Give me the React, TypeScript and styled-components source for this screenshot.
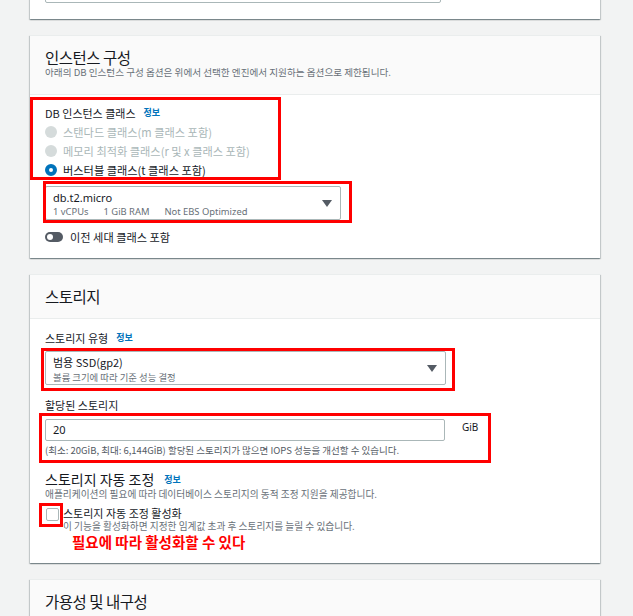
import React from 'react';
import styled, { createGlobalStyle } from 'styled-components';

const GlobalStyle = createGlobalStyle`
  html, body {
    margin: 0;
    padding: 0;
    background: #f2f3f3;
  }
  body {
    font-family: "Noto Sans CJK KR", "Noto Sans", sans-serif;
    color: #16191f;
    overflow: hidden;
  }
`;

// page + cards

const Page = styled.div`
  display: flex;
  flex-direction: column;
  gap: 16px;
  width: 570px;
  margin-top: -28px;
  padding-left: 30px;
`;

const Card = styled.section`
  background: #ffffff;
  border-top: 1px solid #eaeded;
  box-shadow: 0 1px 1px 0 rgba(0, 28, 36, 0.3), 1px 1px 1px 0 rgba(0, 28, 36, 0.15),
    -1px 1px 1px 0 rgba(0, 28, 36, 0.15);
`;

const CardHeader = styled.header<{ $sub?: boolean }>`
  background: #fafafa;
  padding: 12px 15px ${p => (p.$sub ? '15px' : '13px')};
  border-bottom: 1px solid #eaeded;
`;

const CardTitle = styled.h2`
  margin: 0;
  height: 18px;
  font-size: 15.5px;
  line-height: 18px;
  font-weight: 400;
  letter-spacing: -0.5px;
  color: #16191f;
`;

const CardSub = styled.p`
  margin: 0;
  height: 13px;
  font-size: 9.6px;
  line-height: 13px;
  color: #687078;
`;

const CardBody = styled.div<{ $pt?: number; $pb?: number }>`
  display: flex;
  flex-direction: column;
  align-items: flex-start;
  padding: ${p => p.$pt ?? 10}px 15px ${p => p.$pb ?? 12}px;
`;

// red annotation box drawn over the content
const Mark = styled.div<{ $box: [number, number, number, number] }>`
  position: relative;
  &::after {
    content: '';
    position: absolute;
    left: ${p => p.$box[0]}px;
    top: ${p => p.$box[1]}px;
    width: ${p => p.$box[2]}px;
    height: ${p => p.$box[3]}px;
    box-sizing: border-box;
    border: 3px solid #ff0000;
    pointer-events: none;
  }
`;

// form parts

const Label = styled.div<{ $mt?: number }>`
  display: flex;
  align-items: center;
  gap: 8px;
  height: 16px;
  margin-top: ${p => p.$mt ?? 0}px;
  font-size: 11px;
  line-height: 16px;
  color: #16191f;
`;

const Info = styled.span`
  font-size: 9px;
  font-weight: 700;
  color: #0073bb;
`;

const RadioGroup = styled.div`
  display: flex;
  flex-direction: column;
  margin-top: 1px;
`;

const RadioRow = styled.label<{ $disabled?: boolean }>`
  display: flex;
  align-items: center;
  gap: 6px;
  height: 19px;
  font-size: 11.2px;
  color: ${p => (p.$disabled ? '#aab7b8' : '#16191f')};
`;

const RadioDot = styled.span<{ $checked?: boolean; $disabled?: boolean }>`
  width: 12px;
  height: 12px;
  box-sizing: border-box;
  border-radius: 50%;
  background: ${p => (p.$disabled ? '#d5dbdb' : '#ffffff')};
  border: ${p => (p.$checked ? '4px solid #0073bb' : p.$disabled ? 'none' : '1px solid #aab7b8')};
`;

const Select = styled.div<{ $w: number }>`
  display: flex;
  align-items: center;
  justify-content: space-between;
  box-sizing: border-box;
  width: ${p => p.$w}px;
  height: 34px;
  padding: 2px 8px 1px 7px;
  border: 1px solid #aab7b8;
  border-radius: 2px;
  background: #ffffff;
`;

const SelectText = styled.div`
  display: flex;
  flex-direction: column;
`;

const SelectMain = styled.span<{ $latin?: boolean }>`
  height: 17px;
  font-family: ${p => (p.$latin ? '"Noto Sans", sans-serif' : 'inherit')};
  font-size: 11px;
  line-height: 17px;
  color: #16191f;
`;

const SelectMeta = styled.span<{ $latin?: boolean }>`
  display: flex;
  gap: 15px;
  height: 12px;
  font-family: ${p => (p.$latin ? '"Noto Sans", sans-serif' : 'inherit')};
  font-size: 9.4px;
  line-height: 12px;
  color: #687078;
`;

const Caret = () => (
  <svg width="10" height="7" viewBox="0 0 10 7">
    <polygon points="0,0 10,0 5,7" fill="#545b64" />
  </svg>
);

const ToggleRow = styled.div`
  display: flex;
  align-items: center;
  gap: 7px;
  margin-top: 8px;
  height: 18px;
  font-size: 11.2px;
  color: #16191f;
`;

const Toggle = styled.span`
  position: relative;
  width: 18px;
  height: 10px;
  border-radius: 5px;
  background: #545b64;
  &::before {
    content: '';
    position: absolute;
    left: 2px;
    top: 2px;
    width: 6px;
    height: 6px;
    border-radius: 50%;
    background: #ffffff;
  }
`;

const InputRow = styled.div`
  display: flex;
  align-items: flex-start;
  gap: 17px;
  margin-top: 6px;
`;

const Input = styled.div<{ $w: number; $h: number }>`
  box-sizing: border-box;
  width: ${p => p.$w}px;
  height: ${p => p.$h}px;
  padding-left: 7px;
  border: 1px solid #aab7b8;
  border-radius: 2px;
  background: #ffffff;
  font-family: "Noto Sans", sans-serif;
  font-size: 11px;
  line-height: ${p => p.$h - 2}px;
  color: #16191f;
`;

const Unit = styled.span`
  font-family: "Noto Sans", sans-serif;
  font-size: 10px;
  line-height: 16px;
  color: #16191f;
`;

const Help = styled.div<{ $mt?: number }>`
  height: 14px;
  margin-top: ${p => p.$mt ?? 0}px;
  font-size: 9.5px;
  line-height: 14px;
  color: #545b64;
`;

const SubHeading = styled.div`
  display: flex;
  align-items: center;
  gap: 10px;
  height: 17px;
  margin-top: 14px;
  font-size: 14px;
  line-height: 17px;
  color: #16191f;
`;

const Desc = styled.div<{ $lh?: number }>`
  height: ${p => p.$lh ?? 12}px;
  font-size: 9.7px;
  line-height: ${p => p.$lh ?? 12}px;
  color: #687078;
`;

const CheckRow = styled.div`
  display: flex;
  align-items: flex-start;
  gap: 4px;
  margin-top: 6px;
`;

const Checkbox = styled.span`
  display: block;
  width: 13px;
  height: 13px;
  box-sizing: border-box;
  margin: 2px 0 0 1px;
  border: 1px solid #aab7b8;
  border-radius: 2px;
  background: #ffffff;
`;

const CheckText = styled.div`
  display: flex;
  flex-direction: column;
`;

const CheckLabel = styled.span`
  height: 14px;
  font-size: 11px;
  line-height: 14px;
  color: #16191f;
`;

const Note = styled.div`
  height: 18px;
  margin-left: 27px;
  font-size: 14.5px;
  line-height: 18px;
  font-weight: 700;
  color: #ff0000;
`;

export default function App() {
  return (
    <>
      <GlobalStyle />
      <Page>
        <Card>
          <CardBody $pt={0} $pb={16}>
            <Input $w={396} $h={30} />
          </CardBody>
        </Card>

        <Card>
          <CardHeader $sub>
            <CardTitle>인스턴스 구성</CardTitle>
            <CardSub>아래의 DB 인스턴스 구성 옵션은 위에서 선택한 엔진에서 지원하는 옵션으로 제한됩니다.</CardSub>
          </CardHeader>
          <CardBody>
            <Mark $box={[-15, -8, 251, 83]}>
              <Label>
                DB 인스턴스 클래스 <Info>정보</Info>
              </Label>
              <RadioGroup>
                <RadioRow $disabled>
                  <RadioDot $disabled />
                  스탠다드 클래스(m 클래스 포함)
                </RadioRow>
                <RadioRow $disabled>
                  <RadioDot $disabled />
                  메모리 최적화 클래스(r 및 x 클래스 포함)
                </RadioRow>
                <RadioRow>
                  <RadioDot $checked />
                  버스터블 클래스(t 클래스 포함)
                </RadioRow>
              </RadioGroup>
            </Mark>
            <Mark $box={[-2, -5, 309, 42]} style={{ marginTop: 7 }}>
              <Select $w={296}>
                <SelectText>
                  <SelectMain $latin>db.t2.micro</SelectMain>
                  <SelectMeta $latin>
                    <span>1 vCPUs</span>
                    <span>1 GiB RAM</span>
                    <span>Not EBS Optimized</span>
                  </SelectMeta>
                </SelectText>
                <Caret />
              </Select>
            </Mark>
            <ToggleRow>
              <Toggle />
              이전 세대 클래스 포함
            </ToggleRow>
          </CardBody>
        </Card>

        <Card>
          <CardHeader>
            <CardTitle>스토리지</CardTitle>
          </CardHeader>
          <CardBody $pt={11}>
            <Label>
              스토리지 유형 <Info>정보</Info>
            </Label>
            <Mark $box={[-4, -3, 414, 43]} style={{ marginTop: 5 }}>
              <Select $w={401}>
                <SelectText>
                  <SelectMain>범용 SSD(gp2)</SelectMain>
                  <SelectMeta>볼륨 크기에 따라 기준 성능 결정</SelectMeta>
                </SelectText>
                <Caret />
              </Select>
            </Mark>
            <Label $mt={12}>할당된 스토리지</Label>
            <Mark $box={[-6, 0, 452, 50]}>
              <InputRow>
                <Input $w={400} $h={22}>20</Input>
                <Unit>GiB</Unit>
              </InputRow>
              <Help $mt={2}>(최소: 20GiB, 최대: 6,144GiB) 할당된 스토리지가 많으면 IOPS 성능을 개선할 수 있습니다.</Help>
            </Mark>
            <SubHeading>
              스토리지 자동 조정 <Info>정보</Info>
            </SubHeading>
            <Desc>애플리케이션의 필요에 따라 데이터베이스 스토리지의 동적 조정 지원을 제공합니다.</Desc>
            <CheckRow>
              <Mark $box={[-6, -3, 24, 24]}>
                <Checkbox />
              </Mark>
              <CheckText>
                <CheckLabel>스토리지 자동 조정 활성화</CheckLabel>
                <Desc $lh={13}>이 기능을 활성화하면 지정한 임계값 초과 후 스토리지를 늘릴 수 있습니다.</Desc>
              </CheckText>
            </CheckRow>
            <Note>필요에 따라 활성화할 수 있다</Note>
          </CardBody>
        </Card>

        <Card>
          <CardHeader>
            <CardTitle>가용성 및 내구성</CardTitle>
          </CardHeader>
          <CardBody $pb={40} />
        </Card>
      </Page>
    </>
  );
}
